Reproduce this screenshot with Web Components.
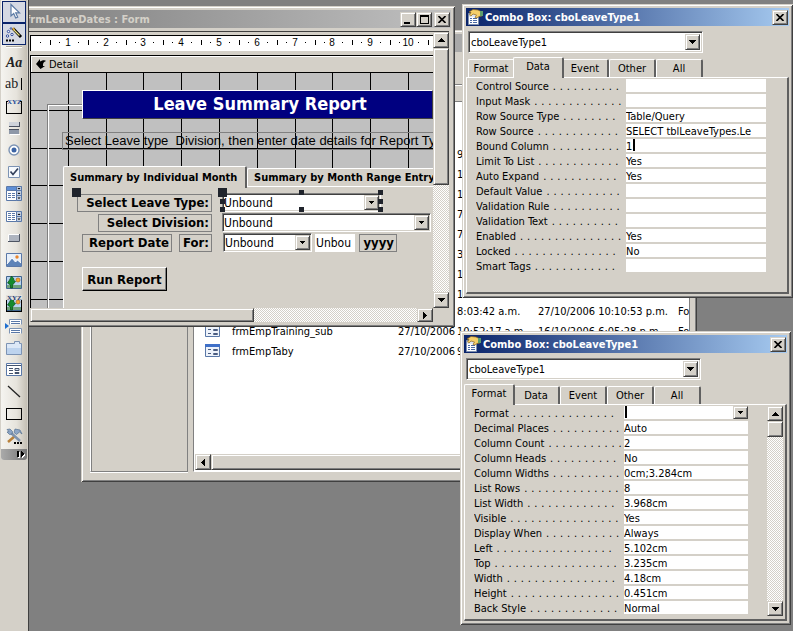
<!DOCTYPE html>
<html lang="en">
<head>
<meta charset="utf-8">
<title>frmLeaveDates : Form</title>
<style>
    html, body { height: 100%; margin: 0; }
    body {
        display: flex;
        overflow: hidden;
        background: #808080;
        color: #000;
        font: 11px/15px "DejaVu Sans Condensed", Tahoma, sans-serif;
    }
    tool-box { flex: none; }
    mdi-area { flex: 1; }
    #database { left: 52px; top: 30px; width: 616px; height: 452px; }
    #form { left: -7px; top: 6px; width: 433px; height: 321px; }
    #sheet1 { left: 433px; top: 4px; width: 331px; height: 294px; }
    #sheet2 { left: 431px; top: 331px; width: 331px; height: 294px; }
</style>
</head>
<body>
<tool-box></tool-box>
<mdi-area>
    <mdi-window id="database" kind="database"><database-list></database-list></mdi-window>
    <mdi-window id="form" kind="form" caption="frmLeaveDates : Form"><form-designer></form-designer></mdi-window>
    <mdi-window id="sheet1" kind="sheet" caption="Combo Box: cboLeaveType1"><property-sheet tab="Data"></property-sheet></mdi-window>
    <mdi-window id="sheet2" kind="sheet" caption="Combo Box: cboLeaveType1"><property-sheet tab="Format"></property-sheet></mdi-window>
</mdi-area>

<script>
const sharedCss = `
    * { box-sizing: border-box; }
    button, input, select { font: inherit; color: inherit; margin: 0; padding: 0; border-radius: 0; outline: none; }
    .raised {
        background: #d4d0c8;
        border: 1px solid;
        border-color: #d4d0c8 #404040 #404040 #d4d0c8;
        box-shadow: inset 1px 1px #fff, inset -1px -1px #808080;
    }
    button.raised { display: grid; place-items: center; }
    .combo {
        display: grid;
        background: #fff;
        border: 1px solid;
        border-color: #808080 #fff #fff #808080;
        box-shadow: inset 1px 1px #404040, inset -1px -1px #d4d0c8;
        padding: 2px;
    }
    .combo select {
        grid-area: 1 / 1;
        appearance: none;
        border: 0;
        background: none;
        width: 100%;
        min-width: 0;
    }
    .combo .raised {
        grid-area: 1 / 1;
        justify-self: end;
        width: 15px;
        display: grid;
        place-items: center;
        pointer-events: none;
    }
    .track { background: repeating-conic-gradient(#fff 0 25%, #d4d0c8 0 50%) 0 0 / 2px 2px; }
    svg { display: block; }
`;

const arrows = {
    up: '<svg width="7" height="4" shape-rendering="crispEdges"><path d="M3 0h1v1h1v1h1v1h1v1H0V3h1V2h1V1h1z"/></svg>',
    down: '<svg width="7" height="4" shape-rendering="crispEdges"><path d="M0 0h7v1H6v1H5v1H4v1H3V3H2V2H1V1H0z"/></svg>',
    small: '<svg width="5" height="3" shape-rendering="crispEdges"><path d="M0 0h5v1H4v1H3v1H2V2H1V1H0z"/></svg>',
    left: '<svg width="4" height="7" shape-rendering="crispEdges"><path d="M3 0h1v7H3V6H2V5H1V4H0V3h1V2h1V1h1z"/></svg>',
    right: '<svg width="4" height="7" shape-rendering="crispEdges"><path d="M0 0h1v1h1v1h1v1h1v1H3v1H2v1H1v1H0z"/></svg>'
};

function combo(id, value, arrow, attrs = '') {
    return `<div class="combo" ${attrs}>
        <select id="${id}"><option>${value}</option></select>
        <span class="raised">${arrows[arrow]}</span>
    </div>`;
}

class ToolBox extends HTMLElement {
    constructor() {
        super();
        this.attachShadow({mode: 'open'});
        this.shadowRoot.innerHTML = `
        <style>
            ${sharedCss}
            :host { display: block; width: 28px; background: #d4d0c8; }
            nav {
                display: flex;
                flex-direction: column;
                margin: 0 1px;
                background: linear-gradient(90deg, #f5f4f0, #e6e3dc 60%, #c4bfb4);
                padding-top: 1px;
                border-radius: 0 0 3px 3px;
                overflow: hidden;
            }
            button {
                width: 24px;
                height: 22px;
                margin-left: 1px;
                border: 1px solid transparent;
                background: none;
                display: grid;
                place-items: center;
            }
            button.on { border-color: #0a246a; background: #d5d9e3; }
            hr { width: 16px; height: 2px; margin: 1px 5px 3px; border: 0; background: #a9a69c; border-bottom: 1px solid #fff; }
            .grip { height: 11px; margin-top: 2px; background: linear-gradient(90deg, #aaa, #777); display: flex; justify-content: flex-end; align-items: center; padding-right: 2px; }
            text { font-family: "Liberation Serif", serif; }
        </style>
        <nav></nav>`;
    }

    connectedCallback() {
        const nav = this.shadowRoot.querySelector('nav');
        this.tools().forEach(([title, icon], i) => {
            const button = document.createElement('button');
            button.title = title;
            button.setAttribute('aria-label', title);
            button.innerHTML = `<svg width="18" height="18" viewBox="0 0 18 18">${icon}</svg>`;
            if (i < 2) button.className = 'on';
            nav.append(button);
            if (i === 1) nav.append(document.createElement('hr'));
        });
        const grip = document.createElement('div');
        grip.className = 'grip';
        grip.innerHTML = '<svg width="8" height="7" shape-rendering="crispEdges"><path fill="#fff" d="M1 1h2v6H1zM5 1h1v1h1v1h1v2H7v1H6v1H5z"/><path d="M0 0h2v6H0zM4 0h1v1h1v1h1v2H6v1H5v1H4z"/></svg>';
        nav.append(grip);
    }

    tools() {
        const page = '<path fill="#fff" stroke="#5a78a8" d="M1.5 2.5h15v12h-15z"/>';
        const tree = `<path fill="#b9d3f0" stroke="#41658f" d="M1.5 3.5h15v12h-15z"/><path fill="#6fa27c" d="M2 12h14v3H2z"/>
            <circle cx="13" cy="7" r="2" fill="#f6a92c" stroke="#b5651d" stroke-width=".7"/>
            <path fill="#138a2c" stroke="#0b4f19" stroke-width=".7" d="M6.5 3L9 6l-.5 1 2 1.5-3 3.500v3h-2v-3L2.500 10l2-3z"/>`;
        return [
            ['Select Objects', '<path fill="#fff" stroke="#5c7ba5" stroke-width="1.2" d="M6 1.5v11.5l2.700-2.500 2 4.500 2-.9-2-4.300h3.800z"/>'],
            ['Control Wizards', '<path stroke="#000" stroke-width="3" d="M8 3.5L16 12"/><path stroke="#e8df80" stroke-width="1.2" d="M8.500 4.500l6 6"/><path stroke="#d9a63a" stroke-width="2" d="M7.5 3l2 2"/><g fill="#fff" stroke="#2e4a9a"><circle cx="3.5" cy="6.5" r="1.2"/><circle cx="7" cy="9.5" r="1.2"/><circle cx="2.5" cy="11" r="1.2"/><circle cx="6" cy="3.5" r=".8"/></g><path d="M1 14.500h2v2H1zM4 14.500h2v2H4zM7 14.500h2v2H7z"/>'],
            ['Label', '<text x="1" y="14" font-size="14" font-weight="bold" font-style="italic" fill="#222">Aa</text>'],
            ['Text Box', '<text x="0" y="13" font-size="14" fill="#222">ab</text><path shape-rendering="crispEdges" d="M16 3h1v12h-1z"/>'],
            ['Option Group', '<path fill="none" stroke="#000" shape-rendering="crispEdges" d="M3 4.500H1.500v12h15v-12H15"/><text x="3" y="7" font-size="7" font-weight="bold" fill="#1f4b97">XYZ</text>'.replace('x="3"', 'x="2"')],
            ['Toggle Button', '<path fill="#cfd3da" d="M4 3h10v4H4z"/><path fill="#4a5160" d="M4 7h10v1H4zM14 3h1v5h-1zM4 10h10v1H4z"/><path fill="#8e98a8" d="M4 11h10v4H4z"/><path fill="#fff" d="M5 15h10v1H5z"/>'],
            ['Option Button', '<circle cx="9" cy="9" r="5" fill="#fff" stroke="#7c93b4" stroke-width="1.4"/><circle cx="9" cy="9" r="2.5" fill="#3c64a5"/>'],
            ['Check Box', '<path fill="#f6f9fd" stroke="#7c93b4" d="M3.5 3.5h11v11h-11z"/><path fill="none" stroke="#33415c" stroke-width="1.7" d="M5.5 8.5l2.500 3 5-6"/>'],
            ['Combo Box', '<path fill="#fff" stroke="#5a78a8" d="M1.5 1.5h15v4h-15zM1.5 5.5h10v10h-10z"/><path fill="#5f8fd6" d="M2 2h9v3H2z"/><path fill="#c2cee0" stroke="#5a78a8" d="M11.5 1.5h5v14h-5z"/><path stroke="#5a78a8" d="M3 8.5h3M7 8.5h3M3 10.5h3M7 10.5h3M3 12.5h3M7 12.5h3M11 5.5h6M11 10.5h6"/><path d="M12.5 3h3L14 4.500zM12.5 9h3L14 7.500zM12.5 12.500h3L14 14z"/>'],
            ['List Box', '<path fill="#fff" stroke="#5a78a8" d="M1.5 4.5h10v10h-10z"/><path fill="#c2cee0" stroke="#5a78a8" d="M11.5 4.5h5v10h-5zM11 9.5h6"/><path stroke="#5a78a8" d="M3 6.5h3M7 6.5h3M3 8.5h3M7 8.5h3M3 10.5h3M7 10.5h3M3 12.5h3M7 12.5h3"/><path d="M12.5 8h3L14 6.500zM12.5 11.500h3L14 13z"/>'],
            ['Command Button', '<path fill="#aeb4bf" stroke="#fff" d="M3.5 5.5h11v7h-11z"/><path fill="none" stroke="#4d5462" d="M3 12.5h11.500V5"/>'],
            ['Image', '<path fill="#e8f0fa" stroke="#5a78a8" d="M1.5 2.5h15v13h-15z"/><circle cx="12" cy="6" r="1.7" fill="#e9852d"/><path fill="#5d83b8" d="M2 13l5-6 3.500 4 2-2L16 12v3H2z"/><path fill="none" stroke="#fff" d="M2 13l5-6 3.500 4 2-2L16 12"/>'],
            ['Unbound Object Frame', tree],
            ['Bound Object Frame', tree + '<path fill="none" stroke="#000" shape-rendering="crispEdges" d="M1.5 4v12.500h15V4"/><path fill="#e4e1da" d="M1 0h16v5H1z"/><text x="2" y="5" font-size="7" font-weight="bold" fill="#1f3b77">XYZ</text>'],
            ['Page Break', '<path fill="#fff" stroke="#7c93b4" d="M4.5 7.5v-5h12v5M4.5 16.5v-5h12v5"/><path stroke="#5a78a8" d="M6 4.5h9M6 6.5h9M6 13.5h9M6 15.5h9"/><path fill="#1f6fd0" d="M0 6l4 3-4 3z"/>'],
            ['Tab Control', '<path fill="#dce8f7" stroke="#7c93b4" d="M1.5 4.5h8v-2h5v2h2v11h-15z"/><path fill="#a9c4e8" d="M2 9h14v6H2z" opacity=".6"/>'],
            ['Subform/Subreport', page + '<path fill="none" stroke="#44536e" d="M2 4.5h14"/><path fill="#dbe5f3" stroke="#44536e" d="M4 7.5h4M4 9.5h4M4 12.5h4M10 7.5h4v2h-4zM10 11.5h4v1h-4z"/>'],
            ['Line', '<path stroke="#222" stroke-width="1.3" d="M3 3l12 11"/>'],
            ['Rectangle', '<path fill="none" stroke="#000" shape-rendering="crispEdges" d="M1.5 3.5h15v11h-15z"/>'],
            ['More Controls', '<path stroke="#b9813a" stroke-width="2.5" d="M10 9l-7 6"/><path stroke="#7f93ae" stroke-width="2.5" d="M5 5l10 9"/><path fill="#8ea6c6" stroke="#55708f" stroke-width=".7" d="M2 2.5l3-.5 2.500 2.500-.5 2.500-2.500.5L2 5l2-.5zM10 2l5 1 2 4-2.500-2-3 2.500L9 5.500z"/><path shape-rendering="crispEdges" d="M9 15h2v2H9zM12 15h2v2h-2zM15 15h2v2h-2z"/>']
        ];
    }
}

class MdiArea extends HTMLElement {
    constructor() {
        super();
        this.attachShadow({mode: 'open'});
        this.shadowRoot.innerHTML = `
        <style>
            :host { display: block; position: relative; overflow: hidden; min-width: 0; border-left: 1px solid #404040; background: #808080; }
            ::slotted(mdi-window) { position: absolute; }
        </style>
        <slot></slot>`;
    }
}

class MdiWindow extends HTMLElement {
    constructor() {
        super();
        this.attachShadow({mode: 'open'});
        this.shadowRoot.innerHTML = `
        <style>
            ${sharedCss}
            :host {
                display: flex;
                flex-direction: column;
                box-sizing: border-box;
                padding: 4px;
                background: #d4d0c8;
                box-shadow: inset 1px 1px #d4d0c8, inset -1px -1px #404040, inset 2px 2px #fff, inset -2px -2px #808080;
            }
            header {
                flex: none;
                display: flex;
                align-items: center;
                height: 18px;
                background: linear-gradient(90deg, #808080, #c0c0c0);
                color: #d4d0c8;
                font-weight: bold;
                padding-right: 1px;
            }
            :host([kind=sheet]) header { background: linear-gradient(90deg, #0a246a, #a6caf0); color: #fff; }
            :host([kind=database]) header { background: #a9a9a9; }
            .caption { flex: 1; white-space: nowrap; }
            .icon { display: none; width: 16px; margin: 0 2px 0 1px; }
            :host([kind=sheet]) .icon { display: block; }
            .box { width: 16px; height: 15px; }
            .box.close { margin-left: 2px; }
            :host([kind=sheet]) .tiny, :host([kind=database]) button { display: none; }
            ::slotted(*) { flex: 1; min-height: 0; }
        </style>
        <header>
            <svg class="icon" width="16" height="16">
                <path fill="#fff" stroke="#7d8fb0" d="M1.5 4.5h10v11h-10z"/>
                <path fill="#dfe6f2" d="M2 5h9v3H2z"/>
                <path stroke="#4a6aa5" d="M3 9.5h2M3 11.5h2M3 13.5h2M6 9.5h4M6 11.5h4M6 13.5h4"/>
                <path fill="#f6cf6a" stroke="#8a6420" stroke-width=".7" d="M2 3l4-2.500 5 .5 4 2v4l-3 .5-2 1.500-2-.5 1.500-2.500L6 5 4 7 2.500 6 4 3.500z"/>
                <path fill="#5f9e6c" d="M13 2h3v5h-3z"/>
            </svg>
            <span class="caption"></span>
            <button class="raised box tiny" aria-label="Minimize"><svg width="10" height="9" shape-rendering="crispEdges"><path d="M1 7h6v2H1z"/></svg></button>
            <button class="raised box tiny" aria-label="Maximize"><svg width="9" height="9" shape-rendering="crispEdges"><path fill-rule="evenodd" d="M0 0h9v9H0zM1 2v6h7V2z"/></svg></button>
            <button class="raised box close" aria-label="Close"><svg width="8" height="7"><path stroke="#000" stroke-width="1.6" d="M.5 0l7 7M7.5 0l-7 7"/></svg></button>
        </header>
        <slot></slot>`;
        this.shadowRoot.querySelector('.caption').textContent = this.getAttribute('caption') || '';
    }
}

class DatabaseList extends HTMLElement {
    constructor() {
        super();
        this.attachShadow({mode: 'open'});
        const icon = `<svg width="15" height="13"><path fill="#eef3fb" stroke="#5a78a8" d="M.5.5h14v12H.5z"/><path fill="#3f70c8" d="M0 0h15v3H0z"/>
            <path fill="#fff" stroke="#4a5c80" d="M3 5.5h3M3 9.5h3M8.5 5.5h4v1h-4zM8.5 9.5h4v1h-4z"/></svg>`;
        const rows = [
            ['', '', '9'], ['', '', '1'], ['', '', '1'], ['', '', '7'], ['', '', '7'], ['', '', '3'], ['', '', '1'], ['', '', '1', '', '', 'short'],
            ['', '', '8:03:42 a.m.', '27/10/2006 10:10:53 p.m.', 'Fo'],
            ['frmEmpTraining_sub', '27/10/2006', '10:52:17 a.m.', '16/10/2006 6:05:28 p.m.', 'Fo'],
            ['frmEmpTaby', '27/10/2006', '9']
        ];
        this.shadowRoot.innerHTML = `
        <style>
            ${sharedCss}
            :host { display: flex; flex-direction: column; }
            .toolbar { height: 33px; border-bottom: 1px solid #808080; box-shadow: 0 1px #fff; }
            .body { flex: 1; min-height: 0; display: flex; gap: 5px; padding: 16px 3px 6px 5px; }
            .groups { width: 98px; border: 1px solid #808080; border-left-color: #fff; box-shadow: inset 1px 0 #808080, 0 1px #fff; }
            .list { flex: 1; min-width: 0; display: flex; flex-direction: column; background: #fff; border: 1px solid #808080; border-bottom-color: #fff; }
            .rows { flex: 1; min-height: 0; padding-top: 43px; overflow: hidden; }
            .row { display: grid; grid-template-columns: 11px 27px 166px 59px 81px 140px 1fr; height: 20px; line-height: 20px; white-space: nowrap; }
            .row.short { height: 17px; }
            .row svg { margin-top: 2px; }
            .type { overflow: hidden; }
            .bar { display: flex; height: 16px; margin-bottom: 1px; border-left: 1px solid #fff; }
            .bar button { width: 16px; }
            .bar .thumb { flex: 1; }
        </style>
        <div class="toolbar"></div>
        <div class="body">
            <div class="groups"></div>
            <div class="list">
                <div class="rows">${rows.map(([name, date, time, created = '', type = '', cls = '']) => `
                    <div class="row ${cls}"><span></span><span>${name && icon}</span><span>${name}</span><span>${date}</span><span>${time}</span><span>${created}</span><span class="type">${type}</span></div>`).join('')}
                </div>
                <div class="bar"><button class="raised" aria-label="Scroll left">${arrows.left}</button><div class="raised thumb"></div></div>
            </div>
        </div>`;
    }
}

class FormDesigner extends HTMLElement {
    constructor() {
        super();
        this.attachShadow({mode: 'open'});
        // centimetre grid, shared by the ruler and the canvas
        const across = [0, 38, 76, 113, 151, 189, 227, 265, 302, 340, 378];
        const down = [37, 75, 112, 150, 188, 226];
        const ruler = across.map((x, i) => `${i ? `<text x="${x - 1}" y="10">${i}</text>` : ''}
            <path d="M${x + 9} 6h1v1h-1zM${x + 19} 4h1v5h-1zM${x + 28} 6h1v1h-1z"/>`).join('');
        this.shadowRoot.innerHTML = `
        <style>
            ${sharedCss}
            :host { display: grid; grid-template-columns: 1fr 16px; grid-template-rows: 1fr 14px; margin: 3px 2px 1px 0; border-top: 1px solid #404040; padding-left: 4px; }
            .main { display: flex; flex-direction: column; min-width: 0; min-height: 0; overflow: hidden; }
            .ruler { flex: none; margin-top: 3px; height: 16px; width: 100%; background: #fff; border: solid #000; border-width: 1px 0 0 1px; }
            .ruler text { font: 10px "Liberation Sans", sans-serif; text-anchor: middle; }
            .section { flex: none; display: flex; align-items: center; gap: 3px; height: 18px; margin-top: 4px; padding-left: 5px; border: 1px solid #000; border-right: 0; box-shadow: inset 1px 1px #fff; }
            .canvas { flex: 1; position: relative; overflow: hidden; background: #c0c0c0; font: 13px "DejaVu Sans Condensed", Tahoma, sans-serif; }
            .canvas > * { position: absolute; }
            .frame { left: 17px; top: 31px; width: 500px; height: 400px; border: 1px solid #808080; box-shadow: inset 1px 1px #fff; }
            .heading { left: 52px; top: 17px; width: 351px; height: 29px; background: #000080; border: 1px solid; border-color: #fff #404040 #404040 #fff; color: #fff; font-size: 18px; font-weight: bold; line-height: 26px; padding-left: 5px; text-align: center; }
            label, .label { border: 1px solid #808080; height: 18px; line-height: 16px; padding-right: 2px; text-align: right; font-weight: bold; white-space: nowrap; }
            .hint { left: 32px; top: 59px; width: 500px; padding: 0 2px; text-align: left; font: 13px/16px "Liberation Sans", Arial, sans-serif; white-space: pre; }
            .page { left: 33px; top: 113px; right: 0; bottom: 0; background: #d4d0c8; border: solid #fff; border-width: 1px 0 0 1px; }
            .tab { background: #d4d0c8; border: 1px solid #fff; border-width: 1px 0 0 1px; border-radius: 2px 2px 0 0; font-size: 11px; font-weight: bold; padding: 0 6px; text-align: left; white-space: nowrap; }
            .tab.on { left: 33px; top: 93px; width: 184px; height: 22px; border-right: 2px solid #606060; }
            .tab.off { left: 217px; top: 95px; width: 200px; height: 18px; }
            .combo select { font-size: 12px; }
            .combo { height: 19px; padding: 1px 1px 1px 1px; }
            .field { background: #fff; border: 0; padding-left: 1px; height: 18px; font-size: 12px; }
            .run { left: 52px; top: 194px; width: 85px; height: 24px; border: 1px solid; border-color: #fff #000 #000 #fff; box-shadow: inset -1px -1px #808080; background: #d4d0c8; font-weight: bold; text-align: center; }
            .handle { width: 5px; height: 5px; background: #20242c; }
            .handle.big { width: 9px; height: 9px; }
            .vbar { display: flex; flex-direction: column; }
            .vbar button { height: 16px; }
            .vbar .thumb { height: 137px; }
            .hbar { display: flex; }
            .hbar .thumb { width: 224px; }
            .hbar button { width: 16px; }
            .track { flex: 1; }
        </style>
        <div class="main">
            <svg class="ruler" shape-rendering="crispEdges">${ruler}</svg>
            <div class="section"><svg width="10" height="10"><path d="M4 0v2.5C7 1 9 1 10 2 7 3 7 5 7 7H9L4.5 10 0 5z"/></svg>Detail</div>
            <div class="canvas">
                <svg width="100%" height="100%" shape-rendering="crispEdges">
                    ${across.map(x => `<path d="M${x} 0h1v400h-1z"/>`).join('')}
                    ${down.map(y => `<path d="M0 ${y}h800v1H0z"/>`).join('')}
                </svg>
                <div class="frame"></div>
                <div class="heading">Leave Summary Report</div>
                <div class="label hint">Select Leave type  Division, then enter date details for Report Ty</div>
                <div class="page"></div>
                <button class="tab off">Summary by Month Range Entry</button>
                <button class="tab on">Summary by Individual Month</button>
                <label for="type" style="left: 47px; top: 121px; width: 135px">Select Leave Type:</label>
                ${combo('type', 'Unbound', 'small', 'style="left: 192px; top: 120px; width: 159px"')}
                <label for="division" style="left: 68px; top: 141px; width: 114px">Select Division:</label>
                ${combo('division', 'Unbound', 'small', 'style="left: 192px; top: 140px; width: 209px"')}
                <label for="month" style="left: 52px; top: 161px; width: 90px">Report Date</label>
                <label for="year" style="left: 149px; top: 161px; width: 33px">For:</label>
                ${combo('month', 'Unbound', 'small', 'style="left: 193px; top: 160px; width: 89px"')}
                <input class="field" id="year" value="Unbou" style="left: 285px; top: 161px; width: 40px">
                <div class="label" style="left: 329px; top: 161px; width: 38px">yyyy</div>
                <button class="run">Run Report</button>
                <i class="handle big" style="left: 42px; top: 115px"></i>
                <i class="handle big" style="left: 188px; top: 115px"></i>
                <i class="handle" style="left: 269px; top: 117px"></i>
                <i class="handle" style="left: 269px; top: 134px"></i>
                <i class="handle" style="left: 348px; top: 117px"></i>
                <i class="handle" style="left: 348px; top: 126px"></i>
                <i class="handle" style="left: 348px; top: 134px"></i>
                <i class="handle" style="left: 190px; top: 126px"></i>
                <i class="handle" style="left: 190px; top: 134px"></i>
            </div>
        </div>
        <div class="vbar"><button class="raised" aria-label="Scroll up">${arrows.up}</button><div class="raised thumb"></div><div class="track"></div><button class="raised" aria-label="Scroll down">${arrows.down}</button></div>
        <div class="hbar"><div class="raised thumb"></div><div class="track"></div><button class="raised" aria-label="Scroll right">${arrows.right}</button></div>`;
    }
}

// label, number of leader dots, value
const properties = {
    Data: [
        ['Control Source', 10, ''], ['Input Mask', 13, ''], ['Row Source Type', 8, 'Table/Query'],
        ['Row Source', 12, 'SELECT tblLeaveTypes.Le'], ['Bound Column', 10, '1'], ['Limit To List', 12, 'Yes'],
        ['Auto Expand', 11, 'Yes'], ['Default Value', 11, ''], ['Validation Rule', 10, ''], ['Validation Text', 10, ''],
        ['Enabled', 15, 'Yes'], ['Locked', 15, 'No'], ['Smart Tags', 12, '']
    ],
    Format: [
        ['Format', 15, ''], ['Decimal Places', 10, 'Auto'], ['Column Count', 11, '2'], ['Column Heads', 10, 'No'],
        ['Column Widths', 10, '0cm;3.284cm'], ['List Rows', 14, '8'], ['List Width', 13, '3.968cm'], ['Visible', 16, 'Yes'],
        ['Display When', 11, 'Always'], ['Left', 17, '5.102cm'], ['Top', 18, '3.235cm'], ['Width', 16, '4.18cm'],
        ['Height', 16, '0.451cm'], ['Back Style', 13, 'Normal'], ['', 0, '']
    ]
};

class PropertySheet extends HTMLElement {
    constructor() {
        super();
        this.attachShadow({mode: 'open'});
        this.tab = this.getAttribute('tab');
        const tabs = ['Format', 'Data', 'Event', 'Other', 'All'];
        this.shadowRoot.innerHTML = `
        <style>
            ${sharedCss}
            :host { display: flex; flex-direction: column; }
            .object { flex: none; margin: 5px 0 4px 2px; width: 235px; height: 22px; }
            .object select { height: 16px; }
            .tabs { flex: none; display: flex; align-items: flex-end; height: 20px; padding-left: 2px; }
            .tabs button {
                width: 47px;
                height: 18px;
                background: #d4d0c8;
                border: solid;
                border-width: 1px 2px 0 1px;
                border-color: #fff #606060 #fff #fff;
                border-radius: 2px 2px 0 0;
            }
            .tabs .on { position: relative; width: 51px; height: 21px; margin: 0 -2px -1px; padding-bottom: 3px; }
            .page {
                flex: 1;
                min-height: 0;
                display: flex;
                padding: 1px 2px 3px 9px;
                border: solid;
                border-width: 1px 2px 2px 1px;
                border-color: #fff #606060 #606060 #fff;
            }
            .rows { flex: 1; overflow: hidden; }
            .row { display: grid; grid-template-columns: 150px 140px; height: 15px; }
            .row label { white-space: nowrap; line-height: 16px; }
            .dots { display: inline-flex; gap: 4px; margin-left: 4px; }
            .dots span { width: 3px; }
            .cell { position: relative; height: 13px; background: #fff; display: grid; }
            .cell input { border: 0; background: none; width: 100%; height: 15px; min-width: 0; }
            .cell select { height: 13px; }
            .cell .combo { border: 0; box-shadow: none; padding: 0; }
            .caret::after { content: ""; position: absolute; left: 7px; top: 0; width: 2px; height: 12px; background: #000; }
            .caret.start::after { left: 1px; }
            .scroll { display: none; width: 16px; flex-direction: column; }
            .scroll button { height: 15px; }
            .scroll .thumb { height: 16px; }
            .scroll .track { flex: 1; }
            :host([tab=Format]) .scroll { display: flex; }
            :host([tab=Format]) .row { grid-template-columns: 150px 124px; }
        </style>
        ${combo('object', 'cboLeaveType1', 'down').replace('class="combo"', 'class="combo object"').replace('<select', '<select aria-label="Object"')}
        <div class="tabs">${tabs.map(t => `<button class="${t === this.tab ? 'on' : ''}">${t}</button>`).join('')}</div>
        <div class="page">
            <div class="rows">${properties[this.tab].map((p, i) => this.row(p, i)).join('')}</div>
            <div class="scroll"><button class="raised" aria-label="Scroll up">${arrows.up}</button><div class="raised thumb"></div><div class="track"></div><button class="raised" aria-label="Scroll down">${arrows.down}</button></div>
        </div>`;
    }

    row([name, dots, value], i) {
        let cls = 'cell';
        if (name === 'Bound Column') cls += ' caret';
        if (name === 'Format') cls += ' caret start';
        const field = name === 'Format' ? combo('p0', value, 'small') : `<input id="p${i}" value="${value}">`;
        return `<div class="row"><label for="p${i}">${name}<span class="dots">${'<span>.</span>'.repeat(dots)}</span></label><div class="${cls}">${field}</div></div>`;
    }
}

customElements.define('tool-box', ToolBox);
customElements.define('mdi-area', MdiArea);
customElements.define('mdi-window', MdiWindow);
customElements.define('database-list', DatabaseList);
customElements.define('form-designer', FormDesigner);
customElements.define('property-sheet', PropertySheet);
</script>
</body>
</html>
